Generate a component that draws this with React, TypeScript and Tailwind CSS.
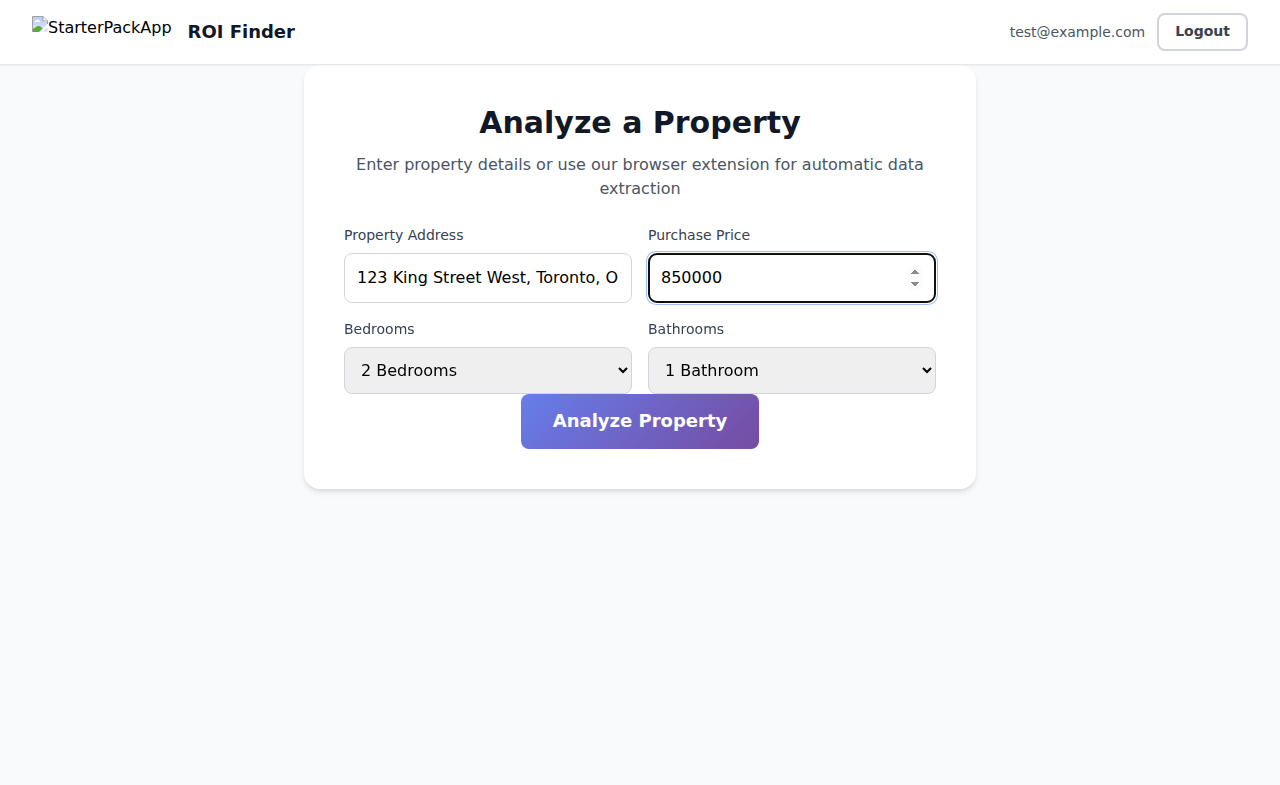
export default function App() {
  const label = "mb-2 block text-sm leading-5 text-[#374151]";
  return (
    <div className="min-h-screen bg-[#f9fafb] font-['DejaVu_Sans',sans-serif] text-black">
      <header className="relative z-10 flex h-[65px] items-center justify-between border-b border-[#e5e7eb] bg-white px-8 shadow-[0_1px_2px_rgba(0,0,0,0.05)]">
        <div className="flex items-center gap-4">
          <span className="flex h-8 items-start">
            <svg width="16" height="16" viewBox="0 0 16 16">
              <defs>
                <linearGradient id="sky" x1="0" y1="0" x2="0" y2="1">
                  <stop offset="0" stopColor="#b8cdf5" />
                  <stop offset="1" stopColor="#dce7fc" />
                </linearGradient>
              </defs>
              <path d="M1 1h10v5h4v3l-7 7H1z" fill="url(#sky)" />
              <path d="M3 6c-.3-1 .5-1.6 1.2-1.4C4.5 3 6.800 3 7 4.600c1-.1 1.300.7 1 1.400z" fill="#fff" />
              <path d="M1 15v-2c2-1 3.500-3 5.500-3s3 1 4 2.500L8 16H1z" fill="#57ad36" />
              <path d="M.5 16V.5h10.700l4.300 4.300V8" fill="none" stroke="#a3a3a3" />
              <path d="M11 .5v4.500h5" fill="#f5f5f5" stroke="#a3a3a3" />
              <path d="M7 16l9-8v2.500L10.500 16z" fill="#fff" />
              <path d="M11.500 15.500l4-4v4z" fill="#c5d8f5" />
            </svg>
            <span className="leading-6">StarterPackApp</span>
          </span>
          <span className="text-lg font-bold text-[#111827]">ROI Finder</span>
        </div>
        <div className="flex items-center gap-3">
          <span className="text-sm text-[#4b5563]">test@example.com</span>
          <button className="h-[38px] rounded-lg border-2 border-[#d1d5db] bg-white px-4 pb-0.5 text-sm font-bold text-[#374151]">Logout</button>
        </div>
      </header>
      <main className="mx-auto h-[424px] w-[672px] rounded-2xl bg-white p-10 shadow-[0_4px_6px_-1px_rgba(0,0,0,0.1),0_2px_4px_-1px_rgba(0,0,0,0.06)]">
        <h1 className="text-center text-[30px] leading-[36px] font-bold text-[#111827]">Analyze a Property</h1>
        <p className="mt-3 text-center text-base leading-6 text-[#4b5563]">Enter property details or use our browser extension for automatic data extraction</p>
        <form className="mt-6" onSubmit={(e) => e.preventDefault()}>
          <div className="grid grid-cols-2 gap-4">
            <div>
              <label className={label}>Property Address</label>
              <input className="block h-[50px] w-full rounded-lg border border-[#d1d5db] bg-white px-3 pb-px" defaultValue="123 King Street West, Toronto, ON" />
            </div>
            <div>
              <label className={label}>Purchase Price</label>
              <input autoFocus type="number" defaultValue="850000" className="block h-[50px] w-full rounded-lg border border-[#667eea] bg-white px-3 pb-px shadow-[0_0_0_2px_rgba(59,130,246,0.5)] [&::-webkit-inner-spin-button]:h-6" />
            </div>
            <div>
              <label className={label}>Bedrooms</label>
              <select className="block h-[47px] w-full rounded-lg border border-[#d1d5db] bg-[#efefef] px-3">
                <option>2 Bedrooms</option>
              </select>
            </div>
            <div>
              <label className={label}>Bathrooms</label>
              <select className="block h-[47px] w-full rounded-lg border border-[#d1d5db] bg-[#efefef] px-3">
                <option>1 Bathroom</option>
              </select>
            </div>
          </div>
          <button className="mx-auto block h-[55px] w-[238px] rounded-lg bg-[linear-gradient(135deg,#667eea_0%,#764ba2_100%)] pb-0.5 text-lg font-bold text-white">Analyze Property</button>
        </form>
      </main>
    </div>
  );
}
